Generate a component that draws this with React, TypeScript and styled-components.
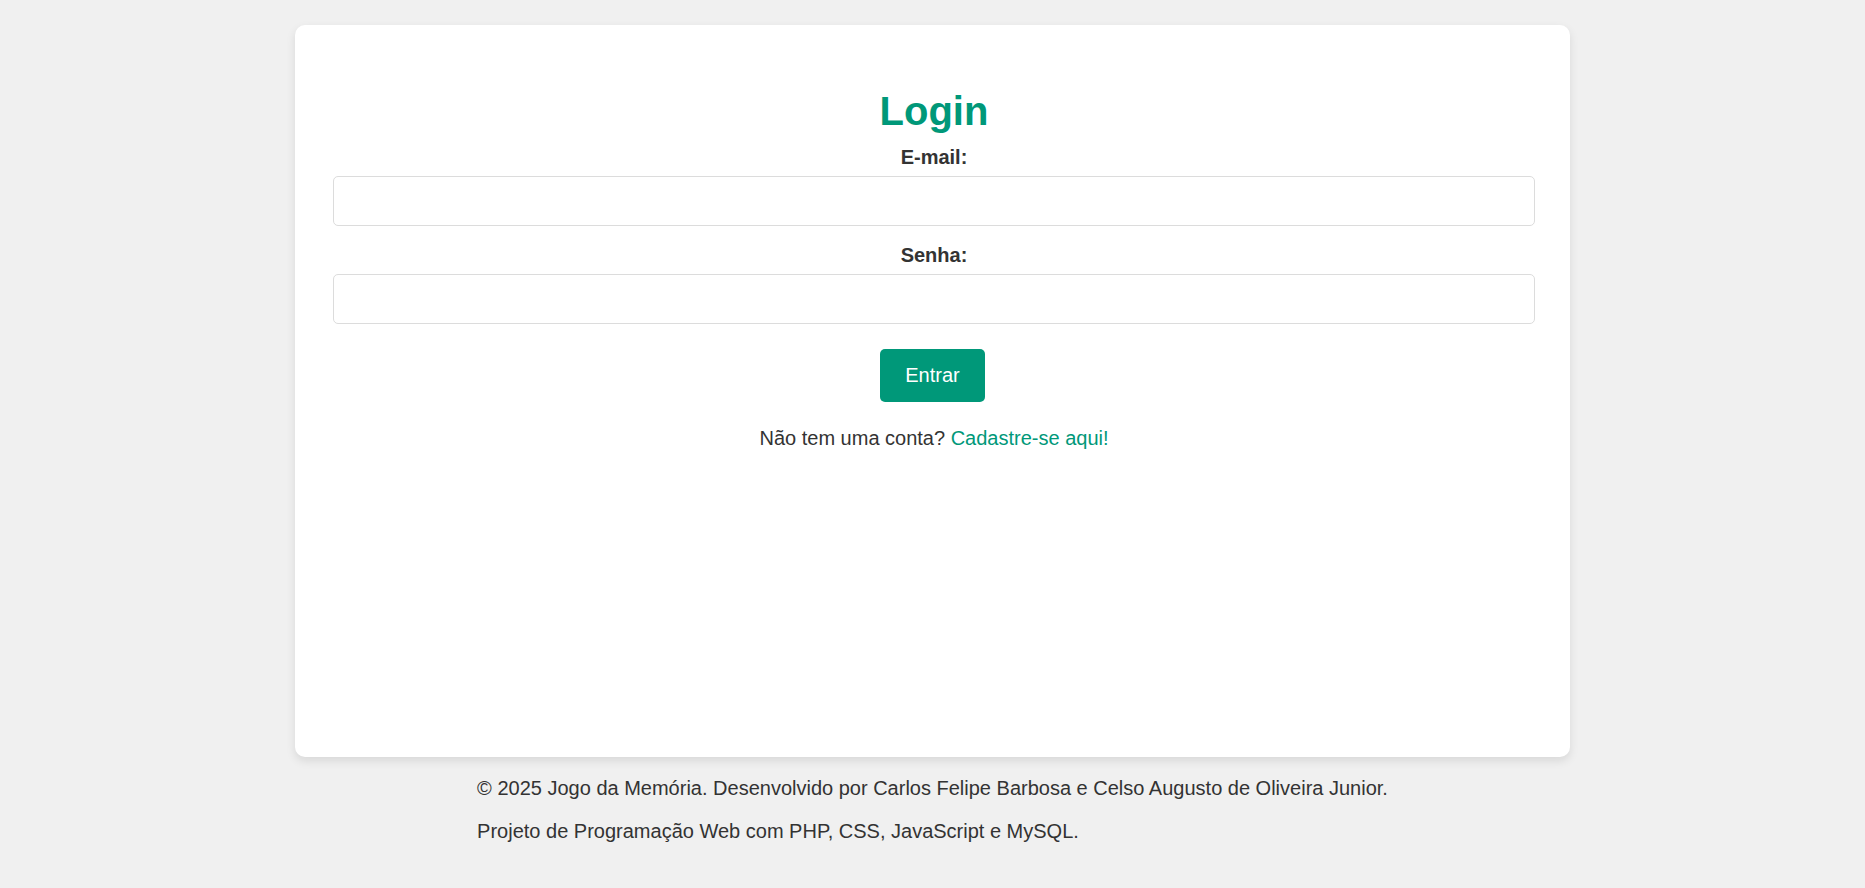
import React from "react";
import styled, { createGlobalStyle } from "styled-components";

const GlobalStyle = createGlobalStyle`
  html, body {
    margin: 0;
    padding: 0;
    background: #f0f0f0;
    font-family: "Liberation Sans", Arial, sans-serif;
    color: #333;
  }
  * { box-sizing: border-box; }
`;

const Page = styled.div`
  padding-top: 25px;
  display: flex;
  flex-direction: column;
  align-items: center;
`;

const Card = styled.main`
  width: 1275px;
  height: 732px;
  background: #fff;
  border-radius: 10px;
  box-shadow: 0 4px 10px rgba(0, 0, 0, 0.1);
  padding: 63px 35px 0 38px;
  display: flex;
  flex-direction: column;
  align-items: stretch;
`;

const Title = styled.h1`
  margin: 0;
  font-size: 40px;
  line-height: 46px;
  font-weight: 700;
  color: #009879;
  text-align: center;
`;

const Form = styled.form`
  display: flex;
  flex-direction: column;
  align-items: stretch;
`;

const Label = styled.label<{ $top: number }>`
  display: block;
  margin-top: ${(p) => p.$top}px;
  font-size: 20px;
  line-height: 23px;
  font-weight: 700;
  text-align: center;
  color: #333;
`;

const Input = styled.input`
  display: block;
  width: 100%;
  height: 50px;
  margin-top: 7px;
  padding: 0 12px;
  border: 1px solid #dcdcdc;
  border-radius: 5px;
  font-family: inherit;
  font-size: 20px;
  background: #fff;
  outline: none;
`;

const Button = styled.button`
  align-self: center;
  margin-top: 25px;
  width: 105px;
  height: 53px;
  margin-left: -3px;
  border: none;
  border-radius: 5px;
  background: #009879;
  color: #fff;
  font-family: inherit;
  font-size: 20px;
  cursor: pointer;
`;

const Note = styled.p`
  margin: 25px 0 0;
  font-size: 20px;
  line-height: 23px;
  text-align: center;
  color: #333;
`;

const Link = styled.a`
  color: #009879;
  text-decoration: none;
`;

const Footer = styled.footer`
  width: fit-content;
  font-size: 20px;
  line-height: 23px;
  color: #333;
  text-align: left;
`;

const FooterLine = styled.p`
  margin: 20px 0 0;
`;

export default function App() {
  return (
    <>
      <GlobalStyle />
      <Page>
        <Card>
          <Title>Login</Title>
          <Form onSubmit={(e) => e.preventDefault()}>
            <Label $top={12} htmlFor="email">E-mail:</Label>
            <Input id="email" type="email" />
            <Label $top={18} htmlFor="senha">Senha:</Label>
            <Input id="senha" type="password" />
            <Button type="submit">Entrar</Button>
          </Form>
          <Note>
            Não tem uma conta? <Link href="#">Cadastre-se aqui!</Link>
          </Note>
        </Card>
        <Footer>
          <FooterLine>
            © 2025 Jogo da Memória. Desenvolvido por Carlos Felipe Barbosa e Celso Augusto de Oliveira Junior.
          </FooterLine>
          <FooterLine>Projeto de Programação Web com PHP, CSS, JavaScript e MySQL.</FooterLine>
        </Footer>
      </Page>
    </>
  );
}
